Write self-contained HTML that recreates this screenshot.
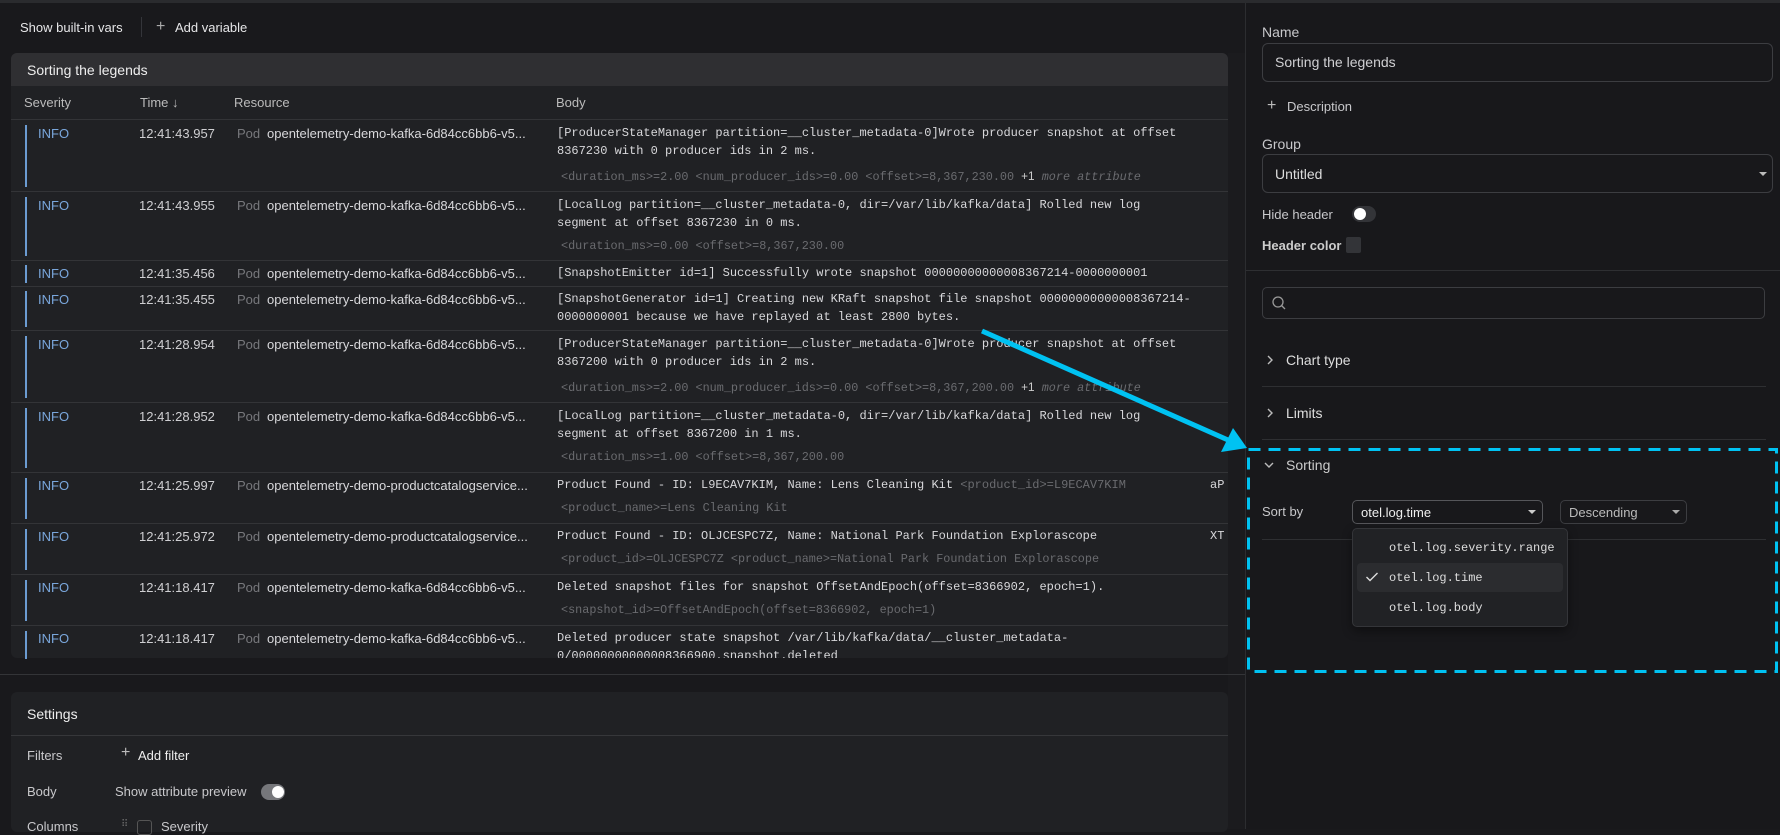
<!DOCTYPE html>
<html><head><meta charset="utf-8"><style>
*{box-sizing:border-box;margin:0;padding:0}
body{width:1780px;height:829px;background:#19191c;font-family:"Liberation Sans",sans-serif;color:#d8d8db;position:relative;overflow:hidden;font-size:13px}
.a{position:absolute;white-space:nowrap}
.m{font-family:"Liberation Mono",monospace;font-size:12px}
.m.att{font-size:11.8px}
.row{position:absolute;left:11px;width:1217px;border-top:1px solid #333437}
.bar{position:absolute;left:14px;width:2px;background:#6b9bd1}
.info{color:#7aa7dc}
.time{color:#cfcfd2}
.pod{color:#77787c}
.att{color:#6a6b6f}
.lbl{color:#c8c8cb}
</style></head><body>
<div class="a" style="left:0;top:0;width:1780px;height:3px;background:#2a2b2e"></div>
<div class="a" style="left:20px;top:20px;font-size:13px;color:#e6e6e8">Show built-in vars</div>
<div class="a" style="left:141px;top:17px;width:1px;height:20px;background:#34353a"></div>
<div class="a" style="left:156px;top:18px;font-size:16px;color:#aaa">+</div>
<div class="a" style="left:175px;top:20px;font-size:13px;color:#e6e6e8">Add variable</div>

<div class="a" style="left:11px;top:53px;width:1217px;height:605px;background:#202124;border-radius:6px;overflow:hidden">
  <div style="position:absolute;left:0;top:0;width:100%;height:33px;background:#2f2f32"></div>
  <div class="a" style="left:16px;top:9px;font-size:14px;color:#eee">Sorting the legends</div>
  <div class="a" style="left:13px;top:42px;color:#bbb">Severity</div>
  <div class="a" style="left:129px;top:42px;color:#bbb">Time ↓</div>
  <div class="a" style="left:223px;top:42px;color:#bbb">Resource</div>
  <div class="a" style="left:545px;top:42px;color:#bbb">Body</div>
</div>
<div class="a" style="left:1228px;top:53px;width:17px;height:776px;background:#1b1b1e"></div>

<div class="row" style="top:119px;height:72px"><div class="bar" style="top:5px;height:62px"></div></div>
<div class="row" style="top:191px;height:69px"><div class="bar" style="top:5px;height:59px"></div></div>
<div class="row" style="top:260px;height:26px"><div class="bar" style="top:4px;height:18px"></div></div>
<div class="row" style="top:286px;height:44px"><div class="bar" style="top:4px;height:36px"></div></div>
<div class="row" style="top:330px;height:72px"><div class="bar" style="top:5px;height:62px"></div></div>
<div class="row" style="top:402px;height:70px"><div class="bar" style="top:5px;height:60px"></div></div>
<div class="row" style="top:472px;height:51px"><div class="bar" style="top:5px;height:41px"></div></div>
<div class="row" style="top:523px;height:51px"><div class="bar" style="top:5px;height:41px"></div></div>
<div class="row" style="top:574px;height:51px"><div class="bar" style="top:5px;height:41px"></div></div>
<div class="row" style="top:625px;height:33px"><div class="bar" style="top:5px;height:28px"></div></div>

<div class="a info" style="left:38px;top:126px">INFO</div><div class="a time" style="left:139px;top:126px">12:41:43.957</div><div class="a pod" style="left:237px;top:126px">Pod</div><div class="a" style="left:267px;top:126px">opentelemetry-demo-kafka-6d84cc6bb6-v5...</div>
<div class="a m" style="left:557px;top:126px">[ProducerStateManager partition=__cluster_metadata-0]Wrote producer snapshot at offset</div>
<div class="a m" style="left:557px;top:144px">8367230 with 0 producer ids in 2 ms.</div>
<div class="a m att" style="left:561px;top:169px">&lt;duration_ms&gt;=2.00 &lt;num_producer_ids&gt;=0.00 &lt;offset&gt;=8,367,230.00 <span style="color:#ccc;font-family:'Liberation Sans'">+1</span> <i>more attribute</i></div>

<div class="a info" style="left:38px;top:198px">INFO</div><div class="a time" style="left:139px;top:198px">12:41:43.955</div><div class="a pod" style="left:237px;top:198px">Pod</div><div class="a" style="left:267px;top:198px">opentelemetry-demo-kafka-6d84cc6bb6-v5...</div>
<div class="a m" style="left:557px;top:198px">[LocalLog partition=__cluster_metadata-0, dir=/var/lib/kafka/data] Rolled new log</div>
<div class="a m" style="left:557px;top:216px">segment at offset 8367230 in 0 ms.</div>
<div class="a m att" style="left:561px;top:239px">&lt;duration_ms&gt;=0.00 &lt;offset&gt;=8,367,230.00</div>

<div class="a info" style="left:38px;top:266px">INFO</div><div class="a time" style="left:139px;top:266px">12:41:35.456</div><div class="a pod" style="left:237px;top:266px">Pod</div><div class="a" style="left:267px;top:266px">opentelemetry-demo-kafka-6d84cc6bb6-v5...</div>
<div class="a m" style="left:557px;top:266px">[SnapshotEmitter id=1] Successfully wrote snapshot 00000000000008367214-0000000001</div>

<div class="a info" style="left:38px;top:292px">INFO</div><div class="a time" style="left:139px;top:292px">12:41:35.455</div><div class="a pod" style="left:237px;top:292px">Pod</div><div class="a" style="left:267px;top:292px">opentelemetry-demo-kafka-6d84cc6bb6-v5...</div>
<div class="a m" style="left:557px;top:292px">[SnapshotGenerator id=1] Creating new KRaft snapshot file snapshot 00000000000008367214-</div>
<div class="a m" style="left:557px;top:310px">0000000001 because we have replayed at least 2800 bytes.</div>

<div class="a info" style="left:38px;top:337px">INFO</div><div class="a time" style="left:139px;top:337px">12:41:28.954</div><div class="a pod" style="left:237px;top:337px">Pod</div><div class="a" style="left:267px;top:337px">opentelemetry-demo-kafka-6d84cc6bb6-v5...</div>
<div class="a m" style="left:557px;top:337px">[ProducerStateManager partition=__cluster_metadata-0]Wrote producer snapshot at offset</div>
<div class="a m" style="left:557px;top:355px">8367200 with 0 producer ids in 2 ms.</div>
<div class="a m att" style="left:561px;top:380px">&lt;duration_ms&gt;=2.00 &lt;num_producer_ids&gt;=0.00 &lt;offset&gt;=8,367,200.00 <span style="color:#ccc;font-family:'Liberation Sans'">+1</span> <i>more attribute</i></div>

<div class="a info" style="left:38px;top:409px">INFO</div><div class="a time" style="left:139px;top:409px">12:41:28.952</div><div class="a pod" style="left:237px;top:409px">Pod</div><div class="a" style="left:267px;top:409px">opentelemetry-demo-kafka-6d84cc6bb6-v5...</div>
<div class="a m" style="left:557px;top:409px">[LocalLog partition=__cluster_metadata-0, dir=/var/lib/kafka/data] Rolled new log</div>
<div class="a m" style="left:557px;top:427px">segment at offset 8367200 in 1 ms.</div>
<div class="a m att" style="left:561px;top:450px">&lt;duration_ms&gt;=1.00 &lt;offset&gt;=8,367,200.00</div>

<div class="a info" style="left:38px;top:478px">INFO</div><div class="a time" style="left:139px;top:478px">12:41:25.997</div><div class="a pod" style="left:237px;top:478px">Pod</div><div class="a" style="left:267px;top:478px">opentelemetry-demo-productcatalogservice...</div>
<div class="a m" style="left:557px;top:478px">Product Found - ID: L9ECAV7KIM, Name: Lens Cleaning Kit <span class="att">&lt;product_id&gt;=L9ECAV7KIM</span></div>
<div class="a m" style="left:1210px;top:478px">aP</div>
<div class="a m att" style="left:561px;top:501px">&lt;product_name&gt;=Lens Cleaning Kit</div>

<div class="a info" style="left:38px;top:529px">INFO</div><div class="a time" style="left:139px;top:529px">12:41:25.972</div><div class="a pod" style="left:237px;top:529px">Pod</div><div class="a" style="left:267px;top:529px">opentelemetry-demo-productcatalogservice...</div>
<div class="a m" style="left:557px;top:529px">Product Found - ID: OLJCESPC7Z, Name: National Park Foundation Explorascope</div>
<div class="a m" style="left:1210px;top:529px">XT</div>
<div class="a m att" style="left:561px;top:552px">&lt;product_id&gt;=OLJCESPC7Z &lt;product_name&gt;=National Park Foundation Explorascope</div>

<div class="a info" style="left:38px;top:580px">INFO</div><div class="a time" style="left:139px;top:580px">12:41:18.417</div><div class="a pod" style="left:237px;top:580px">Pod</div><div class="a" style="left:267px;top:580px">opentelemetry-demo-kafka-6d84cc6bb6-v5...</div>
<div class="a m" style="left:557px;top:580px">Deleted snapshot files for snapshot OffsetAndEpoch(offset=8366902, epoch=1).</div>
<div class="a m att" style="left:561px;top:603px">&lt;snapshot_id&gt;=OffsetAndEpoch(offset=8366902, epoch=1)</div>

<div class="a info" style="left:38px;top:631px">INFO</div><div class="a time" style="left:139px;top:631px">12:41:18.417</div><div class="a pod" style="left:237px;top:631px">Pod</div><div class="a" style="left:267px;top:631px">opentelemetry-demo-kafka-6d84cc6bb6-v5...</div>
<div class="a m" style="left:557px;top:631px">Deleted producer state snapshot /var/lib/kafka/data/__cluster_metadata-</div>
<div class="a" style="left:557px;top:649px;height:9px;overflow:hidden"><div class="m">0/00000000000008366900.snapshot.deleted</div></div>

<div class="a" style="left:0;top:674px;width:1245px;height:1px;background:#333437"></div>
<div class="a" style="left:11px;top:692px;width:1217px;height:140px;background:#202124;border-radius:6px"></div>
<div class="a" style="left:27px;top:706px;font-size:14px;color:#eee">Settings</div>
<div class="a" style="left:11px;top:735px;width:1217px;height:1px;background:#36373a"></div>
<div class="a lbl" style="left:27px;top:748px">Filters</div>
<div class="a" style="left:121px;top:744px;font-size:16px;color:#bbb">+</div>
<div class="a" style="left:138px;top:748px;color:#eee">Add filter</div>
<div class="a lbl" style="left:27px;top:784px">Body</div>
<div class="a lbl" style="left:115px;top:784px">Show attribute preview</div>
<div class="a" style="left:261px;top:784px;width:24px;height:16px;border-radius:8px;background:#76777b"></div>
<div class="a" style="left:272px;top:786px;width:12px;height:12px;border-radius:6px;background:#fff"></div>
<div class="a lbl" style="left:27px;top:819px">Columns</div>
<div class="a" style="left:121px;top:819px;color:#666;font-size:10px">⠿</div>
<div class="a" style="left:137px;top:820px;width:15px;height:15px;border:1px solid #555;border-radius:3px"></div>
<div class="a lbl" style="left:161px;top:819px">Severity</div>

<div class="a" style="left:1245px;top:3px;width:535px;height:826px;background:#18181b;border-left:1px solid #2c2d30"></div>
<div class="a lbl" style="left:1262px;top:24px;font-size:14px">Name</div>
<div class="a" style="left:1262px;top:43px;width:511px;height:39px;border:1px solid #3c3d41;border-radius:6px"></div>
<div class="a" style="left:1275px;top:54px;font-size:14px;color:#d0d0d3">Sorting the legends</div>
<div class="a" style="left:1267px;top:97px;font-size:16px;color:#bbb">+</div>
<div class="a lbl" style="left:1287px;top:99px">Description</div>
<div class="a lbl" style="left:1262px;top:136px;font-size:14px">Group</div>
<div class="a" style="left:1262px;top:154px;width:511px;height:39px;border:1px solid #3c3d41;border-radius:6px"></div>
<div class="a" style="left:1275px;top:166px;font-size:14px;color:#ddd">Untitled</div>
<div class="a" style="left:1759px;top:172px;width:0;height:0;border-left:4px solid transparent;border-right:4px solid transparent;border-top:4px solid #bbb"></div>
<div class="a lbl" style="left:1262px;top:207px">Hide header</div>
<div class="a" style="left:1352px;top:206px;width:24px;height:16px;border-radius:8px;background:#333438"></div>
<div class="a" style="left:1354px;top:208px;width:12px;height:12px;border-radius:6px;background:#fff"></div>
<div class="a" style="left:1262px;top:238px;font-weight:bold;color:#ccc">Header color</div>
<div class="a" style="left:1346px;top:237px;width:15px;height:16px;background:#333438;border-radius:2px"></div>
<div class="a" style="left:1246px;top:270px;width:534px;height:1px;background:#2e2f32"></div>
<div class="a" style="left:1262px;top:287px;width:503px;height:32px;border:1px solid #3c3d41;border-radius:5px"></div>
<svg class="a" style="left:1271px;top:295px" width="16" height="16" viewBox="0 0 16 16"><circle cx="7" cy="7" r="5" fill="none" stroke="#999" stroke-width="1.3"/><line x1="10.5" y1="10.5" x2="14" y2="14" stroke="#999" stroke-width="1.3"/></svg>
<svg class="a" style="left:1265px;top:354px" width="10" height="12"><path d="M3 2 L7 6 L3 10" fill="none" stroke="#bbb" stroke-width="1.4"/></svg>
<div class="a" style="left:1286px;top:352px;font-size:14px;color:#ddd">Chart type</div>
<div class="a" style="left:1262px;top:386px;width:504px;height:1px;background:#2e2f32"></div>
<svg class="a" style="left:1265px;top:407px" width="10" height="12"><path d="M3 2 L7 6 L3 10" fill="none" stroke="#bbb" stroke-width="1.4"/></svg>
<div class="a" style="left:1286px;top:405px;font-size:14px;color:#ddd">Limits</div>
<div class="a" style="left:1262px;top:439px;width:504px;height:1px;background:#2e2f32"></div>
<svg class="a" style="left:1263px;top:460px" width="12" height="10"><path d="M2 3 L6 7 L10 3" fill="none" stroke="#bbb" stroke-width="1.4"/></svg>
<div class="a" style="left:1286px;top:457px;font-size:14px;color:#ccc">Sorting</div>
<div class="a lbl" style="left:1262px;top:504px">Sort by</div>
<div class="a" style="left:1352px;top:500px;width:191px;height:24px;border:1px solid #55565a;border-radius:5px"></div>
<div class="a" style="left:1361px;top:505px;color:#eee">otel.log.time</div>
<div class="a" style="left:1528px;top:510px;border-left:4px solid transparent;border-right:4px solid transparent;border-top:4px solid #ccc"></div>
<div class="a" style="left:1560px;top:500px;width:127px;height:24px;border:1px solid #3c3d41;border-radius:5px"></div>
<div class="a" style="left:1569px;top:505px;color:#bbb">Descending</div>
<div class="a" style="left:1672px;top:510px;border-left:4px solid transparent;border-right:4px solid transparent;border-top:4px solid #aaa"></div>
<div class="a" style="left:1262px;top:539px;width:504px;height:1px;background:#2e2f32"></div>
<div class="a" style="left:1352px;top:528px;width:216px;height:99px;background:#212225;border:1px solid #343539;border-radius:5px;box-shadow:0 4px 10px rgba(0,0,0,.4)"></div>
<div class="a" style="left:1357px;top:563px;width:206px;height:29px;background:#2b2c2f;border-radius:4px"></div>
<div class="a m" style="left:1389px;top:541px;color:#ddd">otel.log.severity.range</div>
<svg class="a" style="left:1365px;top:571px" width="14" height="12"><path d="M1.5 6 L5 9.5 L12.5 2" fill="none" stroke="#ddd" stroke-width="1.4"/></svg>
<div class="a m" style="left:1389px;top:571px;color:#ddd">otel.log.time</div>
<div class="a m" style="left:1389px;top:601px;color:#ddd">otel.log.body</div>

<svg class="a" style="left:0;top:0" width="1780" height="829">
<rect x="1248.5" y="449.5" width="528" height="222" fill="none" stroke="#00c2f2" stroke-width="3" stroke-dasharray="12,8"/>
<line x1="982" y1="331" x2="1228" y2="440" stroke="#00c2f2" stroke-width="5"/>
<polygon points="1247,448 1221,452 1233,428" fill="#00c2f2"/>
</svg>
</body></html>
